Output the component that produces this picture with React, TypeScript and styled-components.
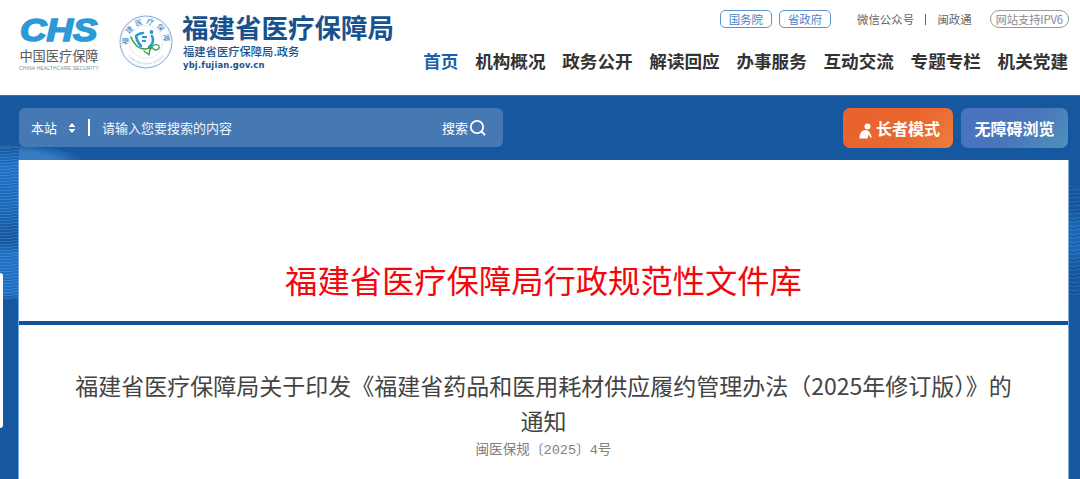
import React from 'react';
import styled, { createGlobalStyle } from 'styled-components';

const CJK = '"Noto Sans CJK SC", "Noto Sans", sans-serif';

const GlobalStyle = createGlobalStyle`
  html, body {
    margin: 0;
    padding: 0;
    height: 479px;
    overflow: hidden;
    background: #fff;
    font-family: ${CJK};
  }
`;

const Header = styled.header`
  height: 95px;
  box-sizing: border-box;
  padding: 10px 12px 0 19px;
  display: flex;
  justify-content: space-between;
  background: #fff;
`;

const Brand = styled.div`
  display: flex;
  align-items: flex-start;
  gap: 20px;
`;

const ChsLogo = styled.div`
  width: 80px;
  display: flex;
  flex-direction: column;
  align-items: center;
`;

const ChsMark = styled.div`
  font-family: "Liberation Sans", sans-serif;
  font-style: italic;
  font-weight: 700;
  font-size: 31px;
  line-height: 28px;
  height: 28px;
  color: #2b9ad6;
  -webkit-text-stroke: 1.6px #2b9ad6;
  transform: scaleX(1.18);
  margin-top: 7px;
`;

const ChsName = styled.div`
  font-size: 13.2px;
  line-height: 17px;
  margin-top: 2px;
  color: #55585c;
  white-space: nowrap;
`;

const ChsEnglish = styled.div`
  font-family: "Liberation Sans", sans-serif;
  font-size: 5px;
  line-height: 7px;
  margin-top: 1px;
  letter-spacing: 0.14px;
  color: #8a8d90;
  white-space: nowrap;
`;

const Emblem = styled.svg`
  width: 54px;
  height: 54px;
  margin-top: 5px;
  flex: none;
`;

const BrandText = styled.div`
  display: flex;
  flex-direction: column;
  margin-left: -11px;
`;

const BrandTitle = styled.div`
  font-size: 26.5px;
  line-height: 34px;
  font-weight: 700;
  color: #17528f;
  white-space: nowrap;
`;

const BrandSub = styled.div`
  margin-left: 1px;
  font-size: 11.3px;
  line-height: 14px;
  font-weight: 500;
  color: #17528f;
  white-space: nowrap;
`;

const BrandUrl = styled.div`
  margin-left: 1px;
  margin-top: 1px;
  font-family: "DejaVu Sans", sans-serif;
  font-size: 8.4px;
  line-height: 13px;
  font-weight: 700;
  letter-spacing: 0.2px;
  color: #17528f;
`;

const HeaderRight = styled.div`
  display: flex;
  flex-direction: column;
  align-items: flex-end;
`;

const TopLinks = styled.div`
  display: flex;
  align-items: center;
  height: 18px;
  margin-right: -1px;
  font-size: 11.4px;
  color: #666;
`;

const Pill = styled.span<{ $blue?: boolean; $gap?: number }>`
  display: inline-flex;
  align-items: center;
  justify-content: center;
  box-sizing: border-box;
  height: 18px;
  padding: 0 ${p => (p.$blue ? 8 : 5)}px;
  margin-left: ${p => p.$gap ?? 0}px;
  border-radius: ${p => (p.$blue ? '5px' : '9px')};
  border: 1px solid ${p => (p.$blue ? '#5f93cb' : '#9a9a9a')};
  color: ${p => (p.$blue ? '#4a84c2' : '#8a8a8a')};
  letter-spacing: ${p => (p.$blue ? '0' : '-0.2px')};
  background: #fff;
  white-space: nowrap;
`;

const TopLink = styled.span<{ $gap?: number }>`
  margin-left: ${p => p.$gap ?? 0}px;
  color: #666;
  white-space: nowrap;
`;

const Divider = styled.span`
  width: 1.4px;
  height: 11px;
  background: #666;
  margin: 0 11px;
`;

const Nav = styled.nav`
  display: flex;
  gap: 16.7px;
  margin-top: 20px;
`;

const NavItem = styled.a<{ $active?: boolean }>`
  font-size: 17.6px;
  line-height: 26px;
  font-weight: 700;
  color: ${p => (p.$active ? '#1c62a8' : '#333')};
  white-space: nowrap;
`;

const Band = styled.main`
  height: 384px;
  box-sizing: border-box;
  padding: 12px 12px 0 19px;
  border-top: 1px solid #3a78b5;
  background-color: #15589f;
  background-repeat: no-repeat;
  background-image:
    repeating-linear-gradient(177deg, rgba(150, 205, 255, 0.2) 0 1px, transparent 1px 3px),
    linear-gradient(180deg, #15589f 0, #2070c4 12%, #1c68b8 40%, #15589f 56%, #15589f 62%, #2070c4 70%, #1f6ec0 96%, #15589f 100%),
    repeating-linear-gradient(174deg, rgba(150, 205, 255, 0.14) 0 1px, transparent 1px 4px),
    linear-gradient(180deg, #15589f 0, #15589f 22%, #1c66b4 36%, #1c66b4 58%, #15589f 76%),
    radial-gradient(ellipse 85px 16px at 0 16px, rgba(90, 160, 230, 0.5) 60%, transparent 100%);
  background-size: 19px 152px, 19px 152px, 12px 110px, 12px 110px, 85px 16px;
  background-position: 0 52px, 0 52px, 100% 90px, 100% 90px, 0 48px;
`;

const Toolbar = styled.div`
  display: flex;
  justify-content: space-between;
  align-items: flex-start;
  height: 40px;
`;

const SearchBar = styled.div`
  width: 484px;
  height: 39px;
  box-sizing: border-box;
  padding: 0 17px 0 12px;
  display: flex;
  align-items: center;
  border-radius: 6px;
  background: #4679b4;
  color: #fff;
  font-size: 13px;
`;

const Scope = styled.span`
  white-space: nowrap;
`;

const Sorter = styled.svg`
  width: 8px;
  height: 10px;
  margin-left: 11px;
`;

const SearchDivider = styled.span`
  width: 2px;
  height: 17px;
  background: #fff;
  margin: 0 12px 0 12px;
`;

const Placeholder = styled.span`
  flex: 1;
  white-space: nowrap;
  color: #f2f5fa;
`;

const SearchAction = styled.span`
  display: flex;
  align-items: center;
  gap: 1px;
  white-space: nowrap;
`;

const SearchIcon = styled.svg`
  width: 17px;
  height: 17px;
`;

const Modes = styled.div`
  display: flex;
  gap: 8px;
`;

const ModeButton = styled.button<{ $tone: 'elder' | 'plain' }>`
  width: ${p => (p.$tone === 'elder' ? '110px' : '107px')};
  height: 40px;
  padding: 0;
  border: 0;
  border-radius: 7px;
  display: flex;
  align-items: center;
  justify-content: center;
  gap: 3px;
  font-family: ${CJK};
  font-size: 16px;
  font-weight: 700;
  color: #fff;
  background: ${p =>
    p.$tone === 'elder'
      ? 'linear-gradient(135deg, #e8622c 0%, #e9682f 60%, #ec7f3c 100%)'
      : 'linear-gradient(135deg, #4a72bf 0%, #4a76bd 55%, #4d93ba 100%)'};
`;

const ElderIcon = styled.svg`
  width: 14px;
  height: 16px;
  margin-top: 6px;
  margin-left: 3px;
`;

const Panel = styled.section`
  background: #fff;
  text-align: center;
  box-shadow: -1px 0 0 #6fa8e3, 1px 0 0 #7fa8d6;
`;

const BannerPanel = styled(Panel)`
  margin-top: 12px;
  height: 165px;
  box-sizing: border-box;
  padding-top: 96px;
  border-bottom: 4px solid #0f5499;
`;

const BannerTitle = styled.h1`
  margin: 0;
  font-size: 32.3px;
  line-height: 46px;
  font-weight: 400;
  color: #f5060c;
`;

const DocPanel = styled(Panel)`
  height: 154px;
  box-sizing: border-box;
  padding: 43px 50px 0;
`;

const DocTitle = styled.h2`
  margin: 0;
  font-size: 23px;
  line-height: 35px;
  font-weight: 400;
  color: #444;
`;

const DocNumber = styled.div`
  margin-top: 3px;
  font-family: "Liberation Mono", "Noto Sans CJK SC", monospace;
  font-size: 13.6px;
  line-height: 20px;
  color: #808080;
`;

const SideTab = styled.div`
  position: fixed;
  left: 0;
  top: 273px;
  width: 3px;
  height: 155px;
  background: #fff;
  border-radius: 0 3px 3px 0;
`;

const NAV = ['首页', '机构概况', '政务公开', '解读回应', '办事服务', '互动交流', '专题专栏', '机关党建'];

export default function App() {
  return (
    <>
      <GlobalStyle />
      <Header>
        <Brand>
          <ChsLogo>
            <ChsMark>CHS</ChsMark>
            <ChsName>中国医疗保障</ChsName>
            <ChsEnglish>CHINA HEALTHCARE SECURITY</ChsEnglish>
          </ChsLogo>
          <Emblem viewBox="0 0 54 54">
            <circle cx="27" cy="27" r="26" fill="#fff" stroke="#7fa9d6" strokeWidth="1" />
            <circle cx="27" cy="27" r="25" fill="none" stroke="#c3d7ec" strokeWidth="0.4" />
            <circle cx="27" cy="27" r="16.500" fill="#fff" stroke="#c3d7ec" strokeWidth="0.5" />
            <defs>
              <path id="ring-top" d="M10.500 34.200a18 18 0 1 1 33 0" />
              <path id="ring-bottom" d="M6 36a23 23 0 0 0 42 0" />
            </defs>
            <text fontSize="7.200" fill="#2a78ba" fontFamily={CJK}>
              <textPath href="#ring-top" startOffset="50%" textAnchor="middle" letterSpacing="3.200">福建医疗保障</textPath>
            </text>
            <text fontSize="2.600" fill="#7fa6cf" fontFamily="Liberation Sans">
              <textPath href="#ring-bottom" startOffset="50%" textAnchor="middle">FUJIAN HEALTHCARE SECURITY</textPath>
            </text>
            <path d="M24 18c-3 .5-6 1.500-7 3 .5 3 2 7 5 10" fill="none" stroke="#2b9ad6" strokeWidth="2.600" strokeLinecap="round" />
            <path d="M23 22h5M23 26h4" stroke="#2b9ad6" strokeWidth="1.800" />
            <path d="M33 21c2 4 1 8-3 11" fill="none" stroke="#2b9ad6" strokeWidth="2.600" strokeLinecap="round" />
            <circle cx="32.500" cy="17" r="1.900" fill="#2b9ad6" />
            <path d="M12 22c2 6 7 12 14 12 3 0 5-1 7-2M30 40c0-3 0-5 3-8" fill="none" stroke="#3da04a" strokeWidth="1.500" strokeLinecap="round" />
            <path d="M33 32c1-3 6-3 7-1s-1 4-3 4-3-1-4-3z" fill="none" stroke="#3da04a" strokeWidth="1.300" />
            <path d="M25 36l4 3" stroke="#3da04a" strokeWidth="1.300" strokeLinecap="round" />
          </Emblem>
          <BrandText>
            <BrandTitle>福建省医疗保障局</BrandTitle>
            <BrandSub>福建省医疗保障局.政务</BrandSub>
            <BrandUrl>ybj.fujian.gov.cn</BrandUrl>
          </BrandText>
        </Brand>
        <HeaderRight>
          <TopLinks>
            <Pill $blue>国务院</Pill>
            <Pill $blue $gap={7}>省政府</Pill>
            <TopLink $gap={26}>微信公众号</TopLink>
            <Divider />
            <TopLink>闽政通</TopLink>
            <Pill $gap={18}>网站支持IPV6</Pill>
          </TopLinks>
          <Nav>
            {NAV.map((label, i) => (
              <NavItem key={label} $active={i === 0}>{label}</NavItem>
            ))}
          </Nav>
        </HeaderRight>
      </Header>
      <Band>
        <Toolbar>
          <SearchBar>
            <Scope>本站</Scope>
            <Sorter viewBox="0 0 8 10">
              <path d="M4 0 7.500 4h-7zM4 10 .5 6h7z" fill="#fff" />
            </Sorter>
            <SearchDivider />
            <Placeholder>请输入您要搜索的内容</Placeholder>
            <SearchAction>
              搜索
              <SearchIcon viewBox="0 0 17 17">
                <circle cx="8" cy="8" r="6.200" fill="none" stroke="#fff" strokeWidth="1.800" />
                <path d="M12.500 12.500 15.500 15.500" stroke="#fff" strokeWidth="1.800" strokeLinecap="round" />
              </SearchIcon>
            </SearchAction>
          </SearchBar>
          <Modes>
            <ModeButton $tone="elder">
              <ElderIcon viewBox="0 0 14 16">
                <circle cx="8.500" cy="3.500" r="3" fill="#fff" />
                <path d="M0.500 15.500c0-5 2-8.500 6-8.500 2 0 3.500 1 4.500 3l2 4.500h-1.500l-2-3-1 4z" fill="#fff" />
              </ElderIcon>
              长者模式
            </ModeButton>
            <ModeButton $tone="plain">无障碍浏览</ModeButton>
          </Modes>
        </Toolbar>
        <BannerPanel>
          <BannerTitle>福建省医疗保障局行政规范性文件库</BannerTitle>
        </BannerPanel>
        <DocPanel>
          <DocTitle>福建省医疗保障局关于印发《福建省药品和医用耗材供应履约管理办法（2025年修订版）》的通知</DocTitle>
          <DocNumber>闽医保规〔2025〕4号</DocNumber>
        </DocPanel>
      </Band>
      <SideTab />
    </>
  );
}
